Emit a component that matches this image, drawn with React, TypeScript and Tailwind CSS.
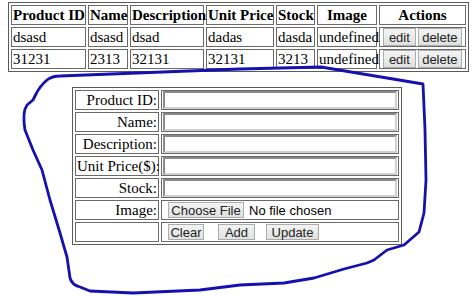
const PRODUCTS = [
  { id: 'dsasd', name: 'dsasd', description: 'dsad', price: 'dadas', stock: 'dasda', image: 'undefined' },
  { id: '31231', name: '2313', description: '32131', price: '32131', stock: '3213', image: 'undefined' },
]

const HEADERS: { label: string; width: string }[] = [
  { label: 'Product ID', width: 'w-[75px]' },
  { label: 'Name', width: 'w-[40px]' },
  { label: 'Description', width: 'w-[74px]' },
  { label: 'Unit Price', width: 'w-[68px]' },
  { label: 'Stock', width: 'w-[39px]' },
  { label: 'Image', width: 'w-[60px]' },
  { label: 'Actions', width: 'w-[87px]' },
]

const FIELDS = ['Product ID:', 'Name:', 'Description:', 'Unit Price($):', 'Stock:']

const cell = 'border border-[#6a6a6a] px-[1px] py-0 h-[20px] whitespace-nowrap'
const btn =
  'h-full border border-[#adadad] bg-gradient-to-b from-[#f4f4f4] to-[#e0e0e0] font-["Liberation_Sans",Arial,sans-serif] text-[13px] leading-none text-[#222]'

export default function App() {
  return (
    <div className="relative h-[296px] w-[474px] overflow-hidden bg-white font-['Liberation_Serif','Times_New_Roman',serif] text-[15px] leading-[17px] text-black">
      {/* Product list */}
      <table className="ml-[8px] mt-[2px] w-[459px] table-fixed border-separate border-spacing-[2px] border border-[#5a5a5a]">
        <thead>
          <tr>
            {HEADERS.map((h) => (
              <th key={h.label} className={`${cell} ${h.width} text-center font-bold`}>
                {h.label}
              </th>
            ))}
          </tr>
        </thead>
        <tbody>
          {PRODUCTS.map((p) => (
            <tr key={p.id}>
              <td className={cell}>{p.id}</td>
              <td className={cell}>{p.name}</td>
              <td className={cell}>{p.description}</td>
              <td className={cell}>{p.price}</td>
              <td className={cell}>{p.stock}</td>
              <td className={cell}>{p.image}</td>
              <td className={`${cell} p-0`}>
                <div className="flex h-[18px] gap-[2px] px-[2px]">
                  <button type="button" className={`${btn} w-[34px]`}>
                    edit
                  </button>
                  <button type="button" className={`${btn} w-[46px]`}>
                    delete
                  </button>
                </div>
              </td>
            </tr>
          ))}
        </tbody>
      </table>

      {/* Product form */}
      <table className="mx-auto mt-[15px] w-[330px] table-fixed border-separate border-spacing-[2px] border border-[#5a5a5a]">
        <tbody>
          {FIELDS.map((label) => (
            <tr key={label}>
              <td className={`${cell} w-[84px] text-right`}>{label}</td>
              <td className={`${cell} p-0`}>
                <input
                  type="text"
                  className="block h-[18px] w-full border-2 border-t-[#8a8a8a] border-l-[#8a8a8a] border-b-[#d0d0d0] border-r-[#d0d0d0] bg-white outline-none"
                />
              </td>
            </tr>
          ))}
          <tr>
            <td className={`${cell} text-right`}>Image:</td>
            <td className={`${cell} p-0`}>
              <div className="flex h-[18px] items-center gap-[5px] py-[1px] pl-[5px] font-['Liberation_Sans',Arial,sans-serif] text-[13px]">
                <button type="button" className={`${btn} w-[76px]`}>
                  Choose File
                </button>
                <span>No file chosen</span>
              </div>
            </td>
          </tr>
          <tr>
            <td className={cell} />
            <td className={`${cell} p-0`}>
              <div className="flex h-[18px] items-center py-[1px] pl-[5px]">
                <button type="button" className={`${btn} w-[36px]`}>
                  Clear
                </button>
                <button type="button" className={`${btn} ml-[14px] w-[37px]`}>
                  Add
                </button>
                <button type="button" className={`${btn} ml-[11px] w-[53px]`}>
                  Update
                </button>
              </div>
            </td>
          </tr>
        </tbody>
      </table>

      {/* Hand-drawn highlight loop */}
      <svg className="pointer-events-none absolute inset-0" width="474" height="296" viewBox="0 0 474 296">
        <path
          d="M240 69 L60 76 Q52 76 47 80 Q40 86 36 94 L33 100 L27 105 Q22 112 25 130 L33 150 L42 170 L50 200 L60 233 L67 257 L70 278 Q72 285 80 287 L90 291 L133 293 L200 290 L240 285 L284 283 L314 278 L344 269 L367 263 L374 260 L387 250 L404 245 L419 232 L424 213 L426 180 L425 130 L423 84 L321 67 Z"
          fill="none"
          stroke="#1510b0"
          strokeWidth="2.8"
          strokeLinejoin="round"
          strokeLinecap="round"
        />
      </svg>
    </div>
  )
}
